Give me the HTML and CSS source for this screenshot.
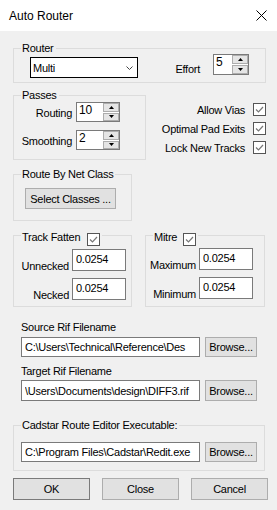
FILE: index.html
```html
<!DOCTYPE html>
<html lang="en">
<head>
  <meta charset="UTF-8" />
  <meta name="viewport" content="width=device-width, initial-scale=1.0"/>
  <title>Auto Router</title>
  <link rel="stylesheet" href="styles.css">
</head>
<body>
  <div class="dialog">
    <div class="titlebar">
      <span class="title">Auto Router</span>
      <svg class="close" width="11" height="11" viewBox="0 0 11 11"><path d="M0.5 0.5 L10.5 10.5 M10.5 0.5 L0.5 10.5" stroke="#000" stroke-width="1" fill="none"/></svg>
    </div>

    <div class="group router">
      <div class="group-title">Router</div>
      <div class="router-row">
        <div class="combo">
          <span>Multi</span>
          <svg class="chevron" width="7" height="4" viewBox="0 0 7 4"><polyline points="0.5,0.5 3.5,3.5 6.5,0.5" stroke="#444" fill="none"/></svg>
        </div>
        <span class="effort-label">Effort</span>
        <div class="spin effort">
          <div class="spin-val">5</div>
          <div class="spin-btns">
            <div class="spin-btn"><svg width="5" height="3" viewBox="0 0 5 3"><path d="M2.5 0 L5 3 L0 3 Z"/></svg></div>
            <div class="spin-btn"><svg width="5" height="3" viewBox="0 0 5 3"><path d="M0 0 L5 0 L2.5 3 Z"/></svg></div>
          </div>
        </div>
      </div>
    </div>

    <div class="passes-row">
      <div class="group passes">
        <div class="group-title">Passes</div>
        <div class="pass-grid">
          <span class="pass-label">Routing</span>
          <div class="spin pass">
            <div class="spin-val">10</div>
            <div class="spin-btns">
              <div class="spin-btn"><svg width="5" height="3" viewBox="0 0 5 3"><path d="M2.5 0 L5 3 L0 3 Z"/></svg></div>
              <div class="spin-btn"><svg width="5" height="3" viewBox="0 0 5 3"><path d="M0 0 L5 0 L2.5 3 Z"/></svg></div>
            </div>
          </div>
          <span class="pass-label">Smoothing</span>
          <div class="spin pass">
            <div class="spin-val">2</div>
            <div class="spin-btns">
              <div class="spin-btn"><svg width="5" height="3" viewBox="0 0 5 3"><path d="M2.5 0 L5 3 L0 3 Z"/></svg></div>
              <div class="spin-btn"><svg width="5" height="3" viewBox="0 0 5 3"><path d="M0 0 L5 0 L2.5 3 Z"/></svg></div>
            </div>
          </div>
        </div>
      </div>

      <div class="options">
        <label class="option">Allow Vias <span class="check"><svg width="11" height="11" viewBox="0 0 11 11"><polyline points="2,5.5 4.5,8 9,3" stroke="#777" stroke-width="1.2" fill="none"/></svg></span></label>
        <label class="option">Optimal Pad Exits <span class="check"><svg width="11" height="11" viewBox="0 0 11 11"><polyline points="2,5.5 4.5,8 9,3" stroke="#777" stroke-width="1.2" fill="none"/></svg></span></label>
        <label class="option">Lock New Tracks <span class="check"><svg width="11" height="11" viewBox="0 0 11 11"><polyline points="2,5.5 4.5,8 9,3" stroke="#777" stroke-width="1.2" fill="none"/></svg></span></label>
      </div>
    </div>

    <div class="group netclass">
      <div class="group-title">Route By Net Class</div>
      <button class="btn select-btn">Select Classes ...</button>
    </div>

    <div class="fatten-row">
      <div class="group fatten">
        <div class="group-title">Track Fatten <span class="check"><svg width="11" height="11" viewBox="0 0 11 11"><polyline points="2,5.5 4.5,8 9,3" stroke="#777" stroke-width="1.2" fill="none"/></svg></span></div>
        <div class="val-grid">
          <span class="val-label">Unnecked</span>
          <input class="val-box" type="text" value="0.0254">
          <span class="val-label">Necked</span>
          <input class="val-box" type="text" value="0.0254">
        </div>
      </div>
      <div class="group mitre">
        <div class="group-title">Mitre <span class="check"><svg width="11" height="11" viewBox="0 0 11 11"><polyline points="2,5.5 4.5,8 9,3" stroke="#777" stroke-width="1.2" fill="none"/></svg></span></div>
        <div class="val-grid">
          <span class="val-label">Maximum</span>
          <input class="val-box" type="text" value="0.0254">
          <span class="val-label">Minimum</span>
          <input class="val-box" type="text" value="0.0254">
        </div>
      </div>
    </div>

    <div class="files">
      <div class="file-label">Source Rif Filename</div>
      <div class="file-row source">
        <input class="path" type="text" value="C:\Users\Technical\Reference\Des">
        <button class="btn browse">Browse...</button>
      </div>
      <div class="file-label target-label">Target Rif Filename</div>
      <div class="file-row target">
        <input class="path" type="text" value="\Users\Documents\design\DIFF3.rif">
        <button class="btn browse">Browse...</button>
      </div>
    </div>

    <div class="group cadstar">
      <div class="group-title">Cadstar Route Editor Executable:</div>
      <div class="file-row">
        <input class="path" type="text" value="C:\Program Files\Cadstar\Redit.exe">
        <button class="btn browse">Browse...</button>
      </div>
    </div>

    <div class="footer">
      <button class="btn action default">OK</button>
      <button class="btn action">Close</button>
      <button class="btn action">Cancel</button>
    </div>
  </div>
</body>
</html>
```

FILE: styles.css
```css
body {
  margin: 0;
  font-family: "Liberation Sans", Arial, sans-serif;
  font-size: 11px;
  letter-spacing: -0.25px;
  color: #000;
  background: #f0f0f0;
}

.dialog {
  width: 277px;
  height: 510px;
  background: #f0f0f0;
  overflow: hidden;
}

.titlebar {
  height: 31px;
  background: #fff;
  display: flex;
  align-items: center;
  justify-content: space-between;
  padding: 0 10px 0 9px;
  box-sizing: border-box;
}

.title {
  font-size: 12px;
  letter-spacing: 0;
}

.close {
  display: block;
}

/* group boxes */
.group {
  border: 1px solid #dcdcdc;
  box-sizing: border-box;
}

.group-title {
  display: flex;
  align-items: flex-start;
  gap: 7px;
  width: fit-content;
  height: 13px;
  line-height: 13px;
  margin: -7px 0 0 7px;
  padding: 0 2px 0 1px;
  background: #f0f0f0;
  white-space: nowrap;
}

.router {
  margin: 17px 11px 0 13px;
  height: 35px;
}

.router-row {
  display: flex;
  align-items: flex-start;
  margin-top: -1px;
  padding: 0 16px 0 16px;
}

.combo {
  width: 108px;
  height: 21px;
  margin-top: 3px;
  box-sizing: border-box;
  border: 1px solid #000;
  background: #fff;
  display: flex;
  align-items: center;
  padding: 0 4px 0 2px;
}

.chevron {
  margin-left: auto;
}

.effort-label {
  margin: 9px 13px 0 auto;
  line-height: 13px;
}

/* spinners */
.spin {
  display: flex;
  height: 21px;
  box-sizing: border-box;
  border: 1px solid #7a7a7a;
  background: #fff;
}

.spin.effort {
  width: 36px;
}

.spin.pass {
  width: 44px;
  height: 20px;
}

.spin-val {
  flex: 1;
  padding: 1px 0 0 2px;
  line-height: 13px;
  font-size: 12px;
}

.spin-btns {
  width: 16px;
  display: flex;
  flex-direction: column;
  gap: 1px;
}

.spin-btn {
  flex: 1;
  border: 1px solid #adadad;
  background: #e5e5e5;
  display: flex;
  align-items: center;
  justify-content: center;
}

.spin-btn svg {
  display: block;
}

/* passes + options */
.passes-row {
  display: flex;
  align-items: flex-start;
  margin: 12px 11px 0 13px;
}

.passes {
  width: 133px;
  height: 65px;
}

.pass-grid {
  display: grid;
  grid-template-columns: 51px 44px;
  column-gap: 4px;
  row-gap: 8px;
  padding-left: 7px;
}

.pass-label {
  text-align: right;
  align-self: end;
  line-height: 13px;
  margin-bottom: 2px;
}

.options {
  margin: 8px 0 0 auto;
  display: flex;
  flex-direction: column;
  gap: 6px;
}

.option {
  display: flex;
  justify-content: flex-end;
  align-items: center;
  gap: 8px;
  height: 13px;
}

.check {
  width: 13px;
  height: 13px;
  box-sizing: border-box;
  border: 1px solid #555;
  background: #fff;
  display: block;
}

.check svg {
  display: block;
}

/* net class */
.netclass {
  width: 119px;
  height: 47px;
  margin: 14px 0 0 13px;
}

.btn {
  font: inherit;
  letter-spacing: inherit;
  color: #000;
  background: #e1e1e1;
  border: 1px solid #adadad;
  padding: 0;
  margin: 0;
  box-sizing: border-box;
}

.select-btn {
  display: block;
  width: 91px;
  height: 21px;
  margin: 7px 0 0 11px;
}

/* track fatten + mitre */
.fatten-row {
  display: flex;
  gap: 13px;
  margin: 14px 0 0 13px;
}

.fatten {
  width: 119px;
  height: 72px;
}

.mitre {
  width: 120px;
  height: 72px;
}

.fatten .group-title,
.mitre .group-title {
  margin-top: -5px;
  height: 15px;
}

.fatten .check,
.mitre .check {
  margin-top: 2px;
}

.mitre .check {
  margin-left: -1px;
}

.val-grid {
  display: grid;
  grid-template-columns: 51px 54px;
  column-gap: 3px;
  row-gap: 7px;
  padding-left: 4px;
  margin-top: 3px;
}

.mitre .val-grid {
  grid-template-columns: 46px 54px;
  margin-top: 2px;
}

.val-label {
  text-align: right;
  align-self: end;
  line-height: 13px;
  margin-bottom: -2px;
}

.val-box,
.path {
  font: inherit;
  letter-spacing: inherit;
  color: #000;
  background: #fff;
  border: 1px solid #7a7a7a;
  border-radius: 0;
  margin: 0;
  padding: 0 0 0 3px;
  box-sizing: border-box;
  outline: none;
}

.val-box {
  width: 54px;
  height: 22px;
  padding-bottom: 2px;
}

/* file names */
.files {
  margin: 14px 0 0 21px;
}

.file-label {
  line-height: 13px;
}

.target-label {
  margin-top: 8px;
}

.file-row {
  display: flex;
  gap: 5px;
  height: 20px;
  margin-top: 3px;
}

.file-row.target {
  height: 21px;
  margin-top: 2px;
}

.path {
  width: 179px;
  height: 100%;
}

.browse {
  width: 52px;
  height: 100%;
}

.cadstar {
  height: 46px;
  margin: 24px 12px 0 13px;
}

.cadstar .file-row {
  margin: 10px 0 0 7px;
}

/* footer */
.footer {
  display: flex;
  gap: 12px;
  margin: 7px 0 0 13px;
}

.action {
  width: 77px;
  height: 22px;
}

.action.default {
  border-color: #7a7a7a;
}
```
